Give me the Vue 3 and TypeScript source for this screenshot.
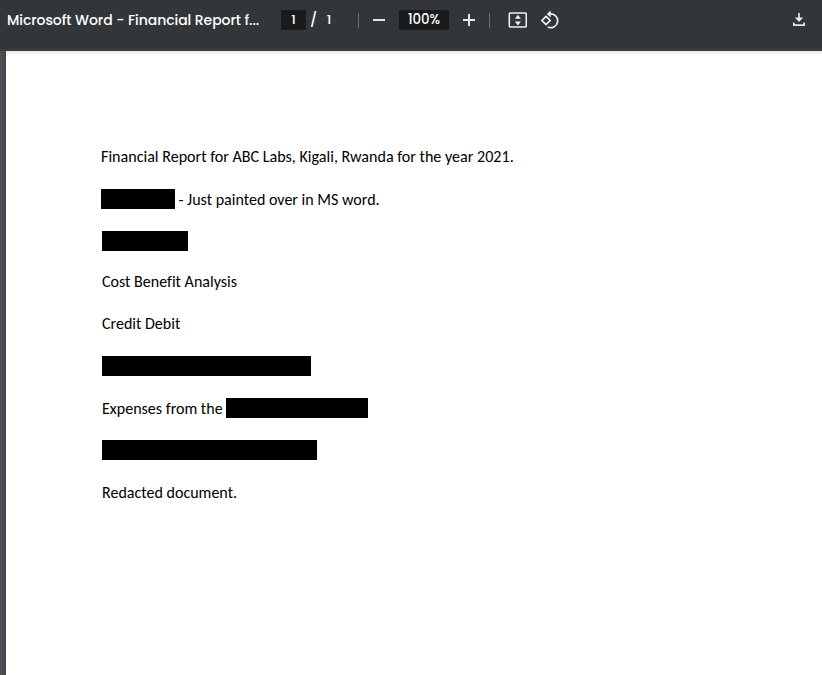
<script setup lang="ts">
interface Part {
  text?: string
  bar?: number
}
interface Line {
  parts: Part[]
  kind: string
}

const lines: Line[] = [
  { kind: 'heading', parts: [{ text: 'Financial Report for ABC Labs, Kigali, Rwanda for the year 2021.' }] },
  { kind: 'painted', parts: [{ bar: 74 }, { text: '- Just painted over in MS word.' }] },
  { kind: 'plain', parts: [{ bar: 86 }] },
  { kind: 'analysis', parts: [{ text: 'Cost Benefit Analysis' }] },
  { kind: 'credit', parts: [{ text: 'Credit Debit' }] },
  { kind: 'plain', parts: [{ bar: 209 }] },
  { kind: 'expenses', parts: [{ text: 'Expenses from the' }, { bar: 142 }] },
  { kind: 'plain', parts: [{ bar: 215 }] },
  { kind: 'closing', parts: [{ text: 'Redacted document.' }] },
]
</script>

<template>
  <div class="viewer">
    <header class="toolbar">
      <div class="title"><span>Microsoft Word - Financial Report f...</span></div>
      <div class="field page-field">1</div>
      <span class="slash">/</span>
      <span class="total">1</span>
      <i class="divider first"></i>
      <svg class="minus" width="12" height="20" viewBox="0 0 12 20"><path d="M0 10H12" stroke="#e3e4e4" stroke-width="2" /></svg>
      <div class="field zoom-field">100%</div>
      <svg class="plus" width="12" height="20" viewBox="0 0 12 20"><path d="M0 10H12M6 4V16" stroke="#e6e6e6" stroke-width="2" /></svg>
      <i class="divider second"></i>
      <svg class="fit" width="20" height="20" viewBox="0 0 20 20">
        <rect x="2.3" y="3" width="17" height="14" rx="1.2" fill="none" stroke="#f1f1f1" stroke-width="1.6" />
        <path d="M10.9 4.8L13.9 8.8H7.9ZM10.9 15.4L13.9 11.6H7.9Z" fill="#f1f1f1" />
      </svg>
      <svg class="rotate" width="20" height="20" viewBox="0 0 20 20" fill="none" stroke="#f1f1f1" stroke-width="1.7">
        <path d="M6 6.4L10.1 10.5L6 14.6L1.9 10.5Z" />
        <path d="M9 3.9H10.4A6.9 6.9 0 1 1 7.8 17" />
        <path d="M10.6 0.6V7.4L6.9 3.95Z" fill="#f1f1f1" stroke="none" />
      </svg>
      <svg class="download" width="14" height="20" viewBox="0 0 14 20">
        <path d="M7 3V10M1.8 12.4V15.2H12.2V12.4" fill="none" stroke="#e6e6e6" stroke-width="1.7" />
        <path d="M2.8 7.6H11.2L7 12Z" fill="#e6e6e6" />
      </svg>
    </header>
    <main class="canvas">
      <article class="sheet">
        <p v-for="(line, i) in lines" :key="i" class="line" :class="line.kind">
          <template v-for="(part, j) in line.parts" :key="j">
            <span v-if="part.text" class="words">{{ part.text }}</span>
            <span v-else class="bar" :style="{ width: part.bar + 'px' }"></span>
          </template>
        </p>
      </article>
    </main>
  </div>
</template>

<style>
body {
  margin: 0;
  overflow: hidden;
}
</style>

<style scoped>
.viewer {
  height: 675px;
  width: 822px;
  display: flex;
  flex-direction: column;
  overflow: hidden;
  background: #484c50;
}
.toolbar {
  box-sizing: border-box;
  height: 51px;
  flex: none;
  display: flex;
  align-items: flex-start;
  padding: 10px 16px 0 7px;
  background: #323639;
  border-bottom: 2px solid #393d40;
  color: #fff;
  font: 500 14px/20px Poppins, Inter, sans-serif;
}
.title {
  width: 274px;
  white-space: nowrap;
  letter-spacing: -0.06px;
}
.field {
  height: 20px;
  background: #1a1b1d;
  text-align: center;
  font-size: 13px;
}
.page-field {
  width: 25px;
}
.slash {
  width: 15px;
  text-align: center;
}
.total {
  width: 16px;
  text-align: center;
  font-size: 13px;
}
.divider {
  width: 1px;
  height: 15px;
  margin-top: 3px;
  background: #6b6e70;
}
.first {
  margin-left: 21px;
}
.minus {
  margin-left: 14px;
}
.zoom-field {
  width: 50px;
  margin-left: 14px;
  font-size: 13.3px;
  letter-spacing: -0.1px;
}
.plus {
  margin-left: 14px;
}
.second {
  margin-left: 14px;
}
.fit {
  margin-left: 17px;
}
.rotate {
  margin-left: 13px;
}
.download {
  margin-left: auto;
}
.canvas {
  flex: 1;
  display: flex;
  padding-left: 6px;
  background: linear-gradient(90deg, #505458, #414548 6px);
}
.sheet {
  flex: 1;
  padding: 96.2px 0 0 95px;
  background: linear-gradient(#e9e9e9, #fff 5px);
}
.line {
  display: flex;
  height: 20px;
  margin: 0 0 21.83px;
  padding-left: 1px;
  color: #000;
  font: 400 16.05px/20px Carlito, Calibri, Lato, sans-serif;
  font-variant-ligatures: none;
  white-space: pre;
}
.heading,
.painted {
  padding-left: 0;
}
.heading .words {
  font-size: 16.08px;
}
.bar {
  height: 20px;
  background: #000;
}
.painted .words {
  margin-left: 3.5px;
}
.painted .words,
.expenses .words,
.closing .words {
  line-height: 22px;
}
.analysis .words,
.credit .words {
  line-height: 18px;
}
.expenses .words {
  width: 124px;
}
</style>
